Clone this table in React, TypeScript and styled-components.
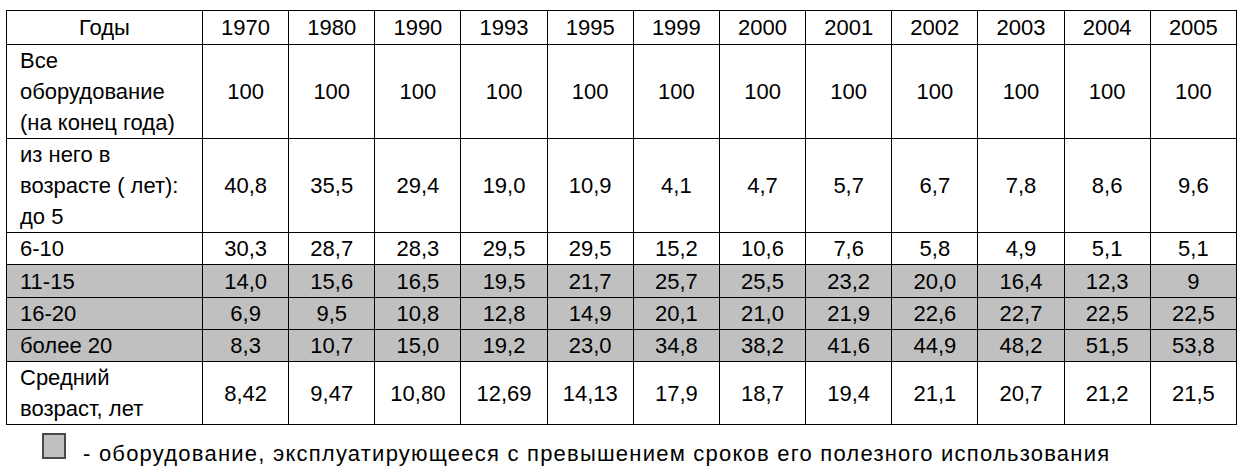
import styled, { createGlobalStyle } from "styled-components";

const GlobalStyle = createGlobalStyle`
  html, body {
    margin: 0;
    padding: 0;
    background: #ffffff;
  }
  body {
    font-family: "Liberation Sans", Arial, sans-serif;
    color: #000000;
  }
`;

const YEARS = [
  "1970", "1980", "1990", "1993", "1995", "1999",
  "2000", "2001", "2002", "2003", "2004", "2005",
];

interface Row {
  label: string[];
  values: string[];
  shaded?: boolean;
  height: number;
}

const ROWS: Row[] = [
  {
    label: ["Все", "оборудование", "(на конец года)"],
    values: Array(12).fill("100"),
    height: 93,
  },
  {
    label: ["из него в", "возрасте ( лет):", "до 5"],
    values: ["40,8", "35,5", "29,4", "19,0", "10,9", "4,1", "4,7", "5,7", "6,7", "7,8", "8,6", "9,6"],
    height: 93,
  },
  {
    label: ["6-10"],
    values: ["30,3", "28,7", "28,3", "29,5", "29,5", "15,2", "10,6", "7,6", "5,8", "4,9", "5,1", "5,1"],
    height: 32,
  },
  {
    label: ["11-15"],
    values: ["14,0", "15,6", "16,5", "19,5", "21,7", "25,7", "25,5", "23,2", "20,0", "16,4", "12,3", "9"],
    shaded: true,
    height: 33,
  },
  {
    label: ["16-20"],
    values: ["6,9", "9,5", "10,8", "12,8", "14,9", "20,1", "21,0", "21,9", "22,6", "22,7", "22,5", "22,5"],
    shaded: true,
    height: 32,
  },
  {
    label: ["более 20"],
    values: ["8,3", "10,7", "15,0", "19,2", "23,0", "34,8", "38,2", "41,6", "44,9", "48,2", "51,5", "53,8"],
    shaded: true,
    height: 31,
  },
  {
    label: ["Средний", "возраст, лет"],
    values: ["8,42", "9,47", "10,80", "12,69", "14,13", "17,9", "18,7", "19,4", "21,1", "20,7", "21,2", "21,5"],
    height: 63,
  },
];

export default function App() {
  return (
    <Page>
      <GlobalStyle />
      <Table>
        <colgroup>
          <col style={{ width: 196 }} />
          {YEARS.map((y) => (
            <col key={y} />
          ))}
        </colgroup>
        <thead>
          <tr>
            <HeadCell>Годы</HeadCell>
            {YEARS.map((y) => (
              <HeadCell key={y}>{y}</HeadCell>
            ))}
          </tr>
        </thead>
        <tbody>
          {ROWS.map((row, i) => (
            <BodyRow key={i} $shaded={row.shaded} style={{ height: row.height }}>
              <LabelCell>
                {row.label.map((line, j) => (
                  <div key={j}>{line}</div>
                ))}
              </LabelCell>
              {row.values.map((v, j) => (
                <ValueCell key={j}>{v}</ValueCell>
              ))}
            </BodyRow>
          ))}
        </tbody>
      </Table>
      <Legend>
        <Swatch />
        <LegendText>
          - оборудование, эксплуатирующееся с превышением сроков его полезного использования
        </LegendText>
      </Legend>
    </Page>
  );
}

const Page = styled.div`
  width: 1248px;
  height: 469px;
  padding: 10px 0 0 6px;
  box-sizing: border-box;
  overflow: hidden;
`;

const Table = styled.table`
  width: 1231px;
  table-layout: fixed;
  border-collapse: collapse;
  font-size: 22px;
  line-height: 31px;

  td,
  th {
    border: 1px solid #000000;
    padding: 0;
    vertical-align: middle;
    font-weight: normal;
  }
`;

const HeadCell = styled.th`
  height: 33px;
  text-align: center;
`;

const BodyRow = styled.tr<{ $shaded?: boolean }>`
  background: ${(p) => (p.$shaded ? "#c0c0c0" : "#ffffff")};
`;

const LabelCell = styled.td`
  text-align: left;
  padding-left: 13px !important;
`;

const ValueCell = styled.td`
  text-align: center;
`;

const Legend = styled.div`
  display: flex;
  align-items: flex-end;
  margin-top: 8px;
  padding-left: 36px;
`;

const Swatch = styled.div`
  width: 20px;
  height: 22px;
  background: #c0c0c0;
  border: 2px solid #4a4a4a;
  box-sizing: content-box;
`;

const LegendText = styled.div`
  margin-left: 17px;
  font-size: 22px;
  line-height: 22px;
  margin-bottom: -6px;
  letter-spacing: 1.22px;
`;
